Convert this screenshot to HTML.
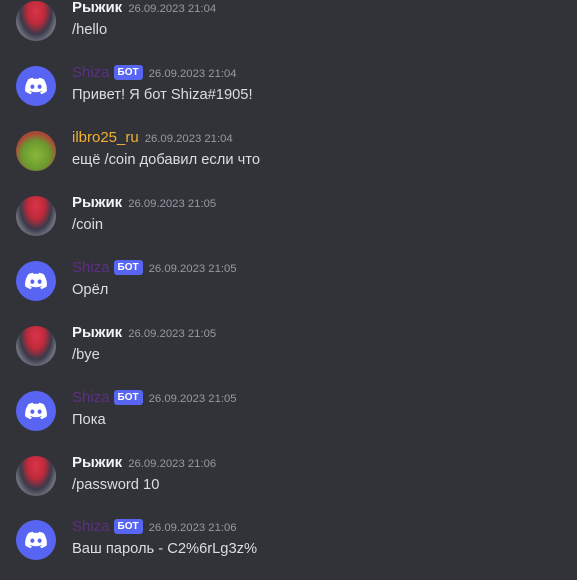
<!DOCTYPE html><html><head><meta charset="utf-8"><style>
body{margin:0;width:577px;height:572px;background:#313338;overflow:hidden;position:relative;font-family:"Liberation Sans","Noto Sans CJK SC",sans-serif}
.m{position:absolute;left:0;width:577px;height:60px}
.av{position:absolute;left:16px;top:0;width:40px;height:40px;border-radius:50%;overflow:hidden}
.h{position:absolute;left:72px;top:-3px;height:20px;line-height:20px;white-space:nowrap}
.n{font-size:15px;font-weight:bold;color:#f2f3f5}
.n.s{color:#5e2e85;font-weight:normal}
.n.i{color:#f0b132;font-weight:normal}
.b{display:inline-block;background:#5865f2;color:#fff;font-size:10px;font-weight:bold;height:15px;line-height:15px;padding:0 4px;border-radius:3px;vertical-align:2px;margin-left:4px}
.t{font-size:11.3px;color:#949ba4;margin-left:6px}
.c{position:absolute;left:72px;top:19px;font-size:14.7px;color:#dbdee1;line-height:20px;white-space:nowrap}
.dc{background:#5865f2}
.ry{background:radial-gradient(ellipse at 50% 25%,#d8344a 0,#c02a3a 30%,#3a3a4a 55%,#80848e 80%,#8a8e98 100%)}
.il{background:radial-gradient(circle at 50% 60%,#8ab838 0,#6a9a30 45%,#b04438 70%,#5a7a38 100%)}
</style></head><body>
<svg width="0" height="0" style="position:absolute"><defs><symbol id="d" viewBox="0 0 40 40"><path fill="#fff" d="M27.6 13.1a18 18 0 0 0-4.5-1.4l-.6 1.2a16.7 16.7 0 0 0-5 0l-.6-1.2a18 18 0 0 0-4.5 1.4c-2.8 4.2-3.600 8.3-3.2 12.3a18 18 0 0 0 5.5 2.8l1.2-1.9a11.7 11.7 0 0 1-1.900-.9l.5-.4a13 13 0 0 0 11 0l.5.4-1.9.9 1.2 1.9a18 18 0 0 0 5.5-2.8c.5-4.7-.8-8.7-3.2-12.300zM16.4 22.9c-1.1 0-2-1-2-2.2s.9-2.2 2-2.2 2 1 2 2.2-.9 2.2-2 2.2zm7.2 0c-1.1 0-2-1-2-2.2s.9-2.2 2-2.2 2 1 2 2.2-.9 2.2-2 2.2z"/></symbol></defs></svg>

<div class="m" style="top:1px"><div class="av ry"></div><div class="h"><span class="n">Рыжик</span><span class="t">26.09.2023 21:04</span></div><div class="c">/hello</div></div>
<div class="m" style="top:66px"><div class="av dc"><svg width="40" height="40"><use href="#d"/></svg></div><div class="h"><span class="n s">Shiza</span><span class="b">БОТ</span><span class="t">26.09.2023 21:04</span></div><div class="c">Привет! Я бот Shiza#1905!</div></div>
<div class="m" style="top:131px"><div class="av il"></div><div class="h"><span class="n i">ilbro25_ru</span><span class="t">26.09.2023 21:04</span></div><div class="c">ещё /coin добавил если что</div></div>
<div class="m" style="top:196px"><div class="av ry"></div><div class="h"><span class="n">Рыжик</span><span class="t">26.09.2023 21:05</span></div><div class="c">/coin</div></div>
<div class="m" style="top:261px"><div class="av dc"><svg width="40" height="40"><use href="#d"/></svg></div><div class="h"><span class="n s">Shiza</span><span class="b">БОТ</span><span class="t">26.09.2023 21:05</span></div><div class="c">Орёл</div></div>
<div class="m" style="top:326px"><div class="av ry"></div><div class="h"><span class="n">Рыжик</span><span class="t">26.09.2023 21:05</span></div><div class="c">/bye</div></div>
<div class="m" style="top:391px"><div class="av dc"><svg width="40" height="40"><use href="#d"/></svg></div><div class="h"><span class="n s">Shiza</span><span class="b">БОТ</span><span class="t">26.09.2023 21:05</span></div><div class="c">Пока</div></div>
<div class="m" style="top:456px"><div class="av ry"></div><div class="h"><span class="n">Рыжик</span><span class="t">26.09.2023 21:06</span></div><div class="c">/password 10</div></div>
<div class="m" style="top:520px"><div class="av dc"><svg width="40" height="40"><use href="#d"/></svg></div><div class="h"><span class="n s">Shiza</span><span class="b">БОТ</span><span class="t">26.09.2023 21:06</span></div><div class="c">Ваш пароль - C2%6rLg3z%</div></div>
</body></html>
